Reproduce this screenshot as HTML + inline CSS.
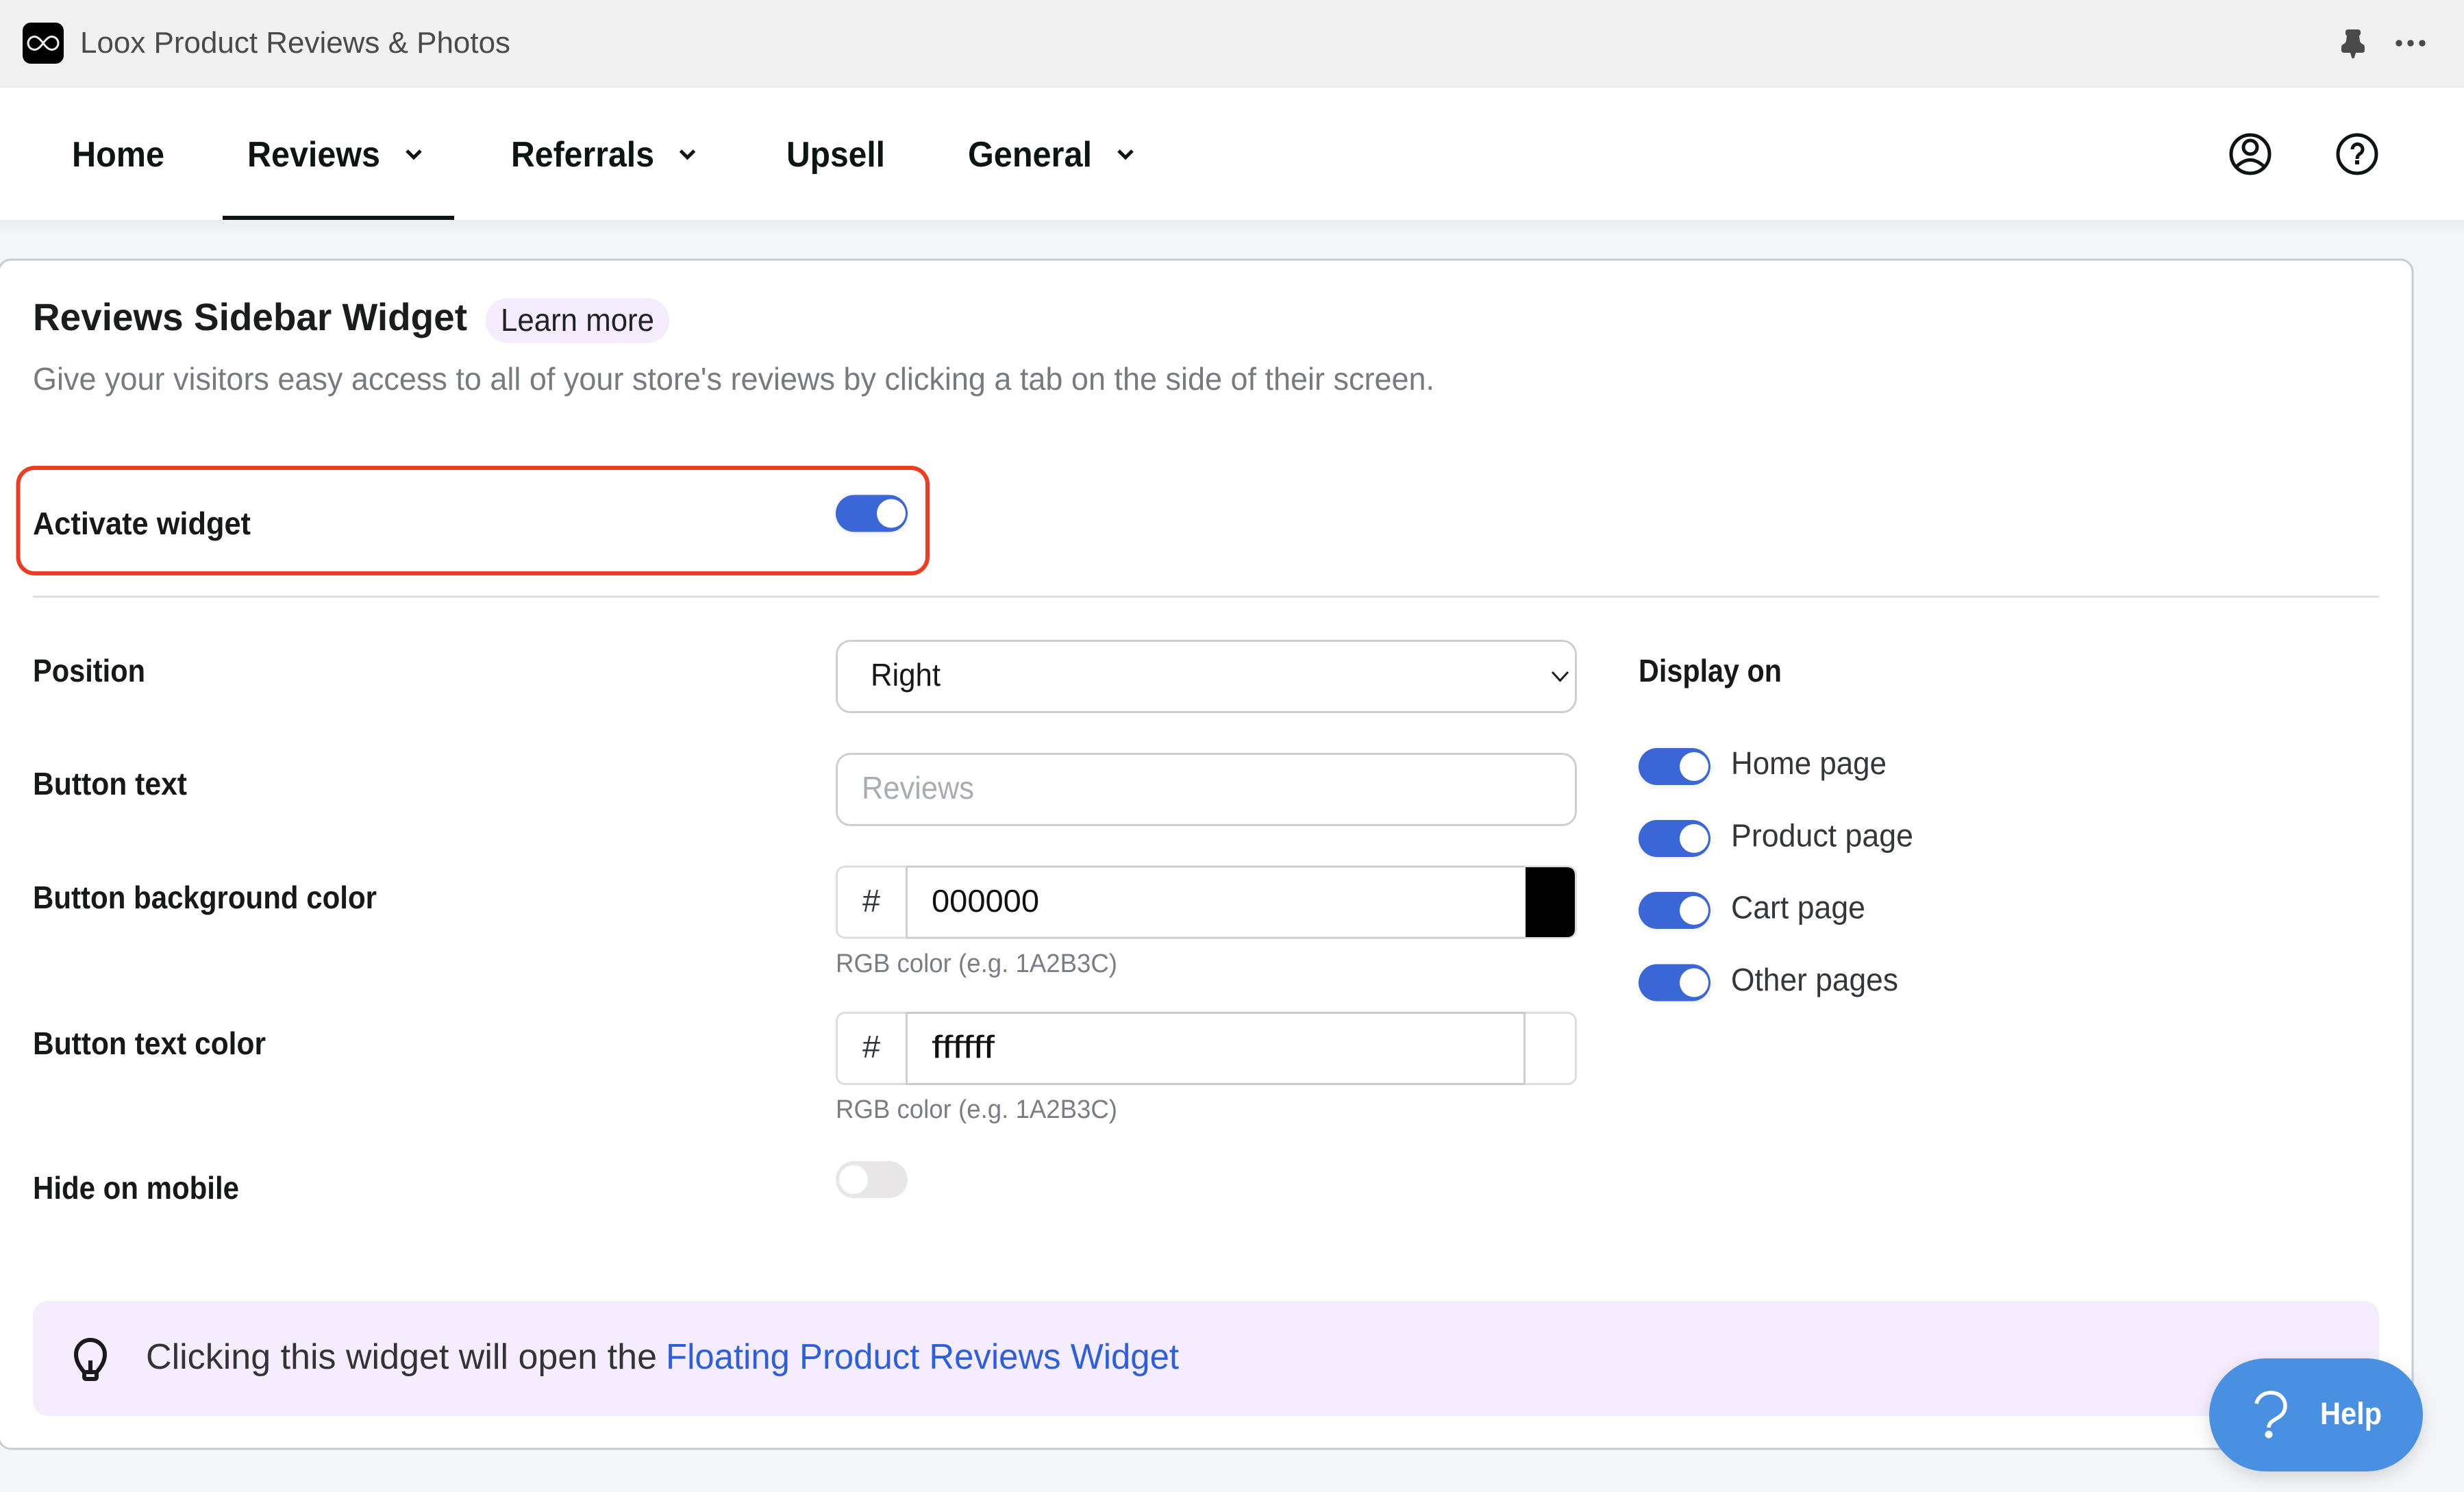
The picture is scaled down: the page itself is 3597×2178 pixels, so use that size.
<!DOCTYPE html>
<html lang="en">
<head>
<meta charset="utf-8">
<title>Loox Product Reviews &amp; Photos</title>
<style>
html,body{margin:0;padding:0;background:#f4f6f9;width:3597px;height:2178px;overflow:hidden}
svg{display:block;position:absolute;left:0;top:0}
text{font-family:"Liberation Sans",Arial,sans-serif;white-space:pre}
.s{font-size:46px;font-weight:700;fill:#16181a}
.r{font-size:46px;fill:#33363a}
.h{font-size:38px;fill:#7a7e84}
.n{font-size:52px;font-weight:700;fill:#0d1512}
</style>
</head>
<body>
<svg width="3597" height="2178" viewBox="0 0 3597 2178" xmlns="http://www.w3.org/2000/svg">
<defs>
<linearGradient id="ns" x1="0" y1="0" x2="0" y2="1"><stop offset="0" stop-color="#eceff2"/><stop offset="1" stop-color="#f4f6f9"/></linearGradient>
<filter id="hs" x="-20%" y="-30%" width="140%" height="170%"><feDropShadow dx="0" dy="8" stdDeviation="12" flood-color="#000" flood-opacity=".14"/></filter>
<filter id="ts" x="-20%" y="-30%" width="140%" height="170%"><feDropShadow dx="0" dy="2" stdDeviation="4" flood-color="#000" flood-opacity=".08"/></filter>
</defs>

<rect width="3597" height="2178" fill="#f4f6f9"/>
<!-- top bar -->
<rect width="3597" height="128" fill="#f1f1f1"/>
<rect y="126" width="3597" height="2" fill="#e9e9e9"/>
<rect x="33" y="33" width="60" height="60" rx="12" fill="#000"/>
<path d="M63 63C58 56 54 53.5 50.5 53.5A9.5 9.5 0 0 0 50.5 72.5C54 72.5 58 70 63 63C68 56 72 53.5 75.5 53.5A9.5 9.5 0 0 1 75.5 72.5C72 72.5 68 70 63 63Z" fill="none" stroke="#eee" stroke-width="3"/>
<text x="117" y="77" font-size="44" fill="#4a4a4a" textLength="628" lengthAdjust="spacingAndGlyphs">Loox Product Reviews &amp; Photos</text>
<path d="M3428 43H3442Q3446 43 3446 47V49Q3446 51 3444 52L3445 60Q3446 63 3450 65Q3452 66 3452 69V73Q3452 77 3448 77H3439L3437 84Q3435 87 3433 84L3431 77H3422Q3418 77 3418 73V69Q3418 66 3420 65Q3424 63 3425 60L3426 52Q3424 51 3424 49V47Q3424 43 3428 43Z" fill="#4a4a4a"/>
<circle cx="3502" cy="63" r="4.7" fill="#4a4a4a"/><circle cx="3519" cy="63" r="4.7" fill="#4a4a4a"/><circle cx="3536" cy="63" r="4.7" fill="#4a4a4a"/>

<!-- nav -->
<rect y="128" width="3597" height="193" fill="#fff"/>
<rect y="321" width="3597" height="26" fill="url(#ns)"/>
<text class="n" x="105" y="243" textLength="135" lengthAdjust="spacingAndGlyphs">Home</text>
<text class="n" x="361" y="243" textLength="194" lengthAdjust="spacingAndGlyphs">Reviews</text>
<path d="M594 220L604 230L614 220" fill="none" stroke="#0d1512" stroke-width="5"/>
<text class="n" x="746" y="243" textLength="209" lengthAdjust="spacingAndGlyphs">Referrals</text>
<path d="M993.500 220L1003.500 230L1013.500 220" fill="none" stroke="#0d1512" stroke-width="5"/>
<text class="n" x="1148" y="243" textLength="144" lengthAdjust="spacingAndGlyphs">Upsell</text>
<text class="n" x="1413" y="243" textLength="181" lengthAdjust="spacingAndGlyphs">General</text>
<path d="M1633 220L1643 230L1653 220" fill="none" stroke="#0d1512" stroke-width="5"/>
<rect x="325" y="315" width="338" height="6" fill="#0b1512"/>
<!-- user icon -->
<circle cx="3285" cy="225" r="28" fill="none" stroke="#0d1512" stroke-width="5"/>
<circle cx="3285" cy="215" r="10" fill="none" stroke="#0d1512" stroke-width="5"/>
<path d="M3265 243Q3285 224 3305 243" fill="none" stroke="#0d1512" stroke-width="5"/>
<!-- question icon -->
<circle cx="3441" cy="225" r="28" fill="none" stroke="#0d1512" stroke-width="5"/>
<path d="M3434 218A7.500 7.500 0 1 1 3445 224.500Q3441 227 3441 232" fill="none" stroke="#0d1512" stroke-width="5"/>
<rect x="3438" y="234" width="6" height="6" fill="#0d1512"/>

<!-- card -->
<rect x="-2" y="379" width="3524" height="1736" rx="18" fill="#fff" stroke="#c4cdd5" stroke-width="3"/>
<text x="48" y="482" font-size="56" font-weight="700" fill="#1a1c1e" textLength="634" lengthAdjust="spacingAndGlyphs">Reviews Sidebar Widget</text>
<rect x="709" y="435" width="268" height="66" rx="33" fill="#f4ecfd"/>
<text x="731" y="483" font-size="46" fill="#202225" textLength="224" lengthAdjust="spacingAndGlyphs">Learn more</text>
<text x="48" y="569" font-size="46" fill="#777b80" textLength="2046" lengthAdjust="spacingAndGlyphs">Give your visitors easy access to all of your store's reviews by clicking a tab on the side of their screen.</text>

<!-- red box -->
<rect x="26.500" y="683" width="1327.500" height="154" rx="24" fill="none" stroke="#ee3b23" stroke-width="6"/>
<text class="s" x="48" y="780" textLength="318" lengthAdjust="spacingAndGlyphs">Activate widget</text>
<g filter="url(#ts)"><rect x="1220" y="722.500" width="105" height="54" rx="27" fill="#3b66d5"/></g>
<circle cx="1301" cy="749.500" r="21" fill="#fff"/>
<rect x="48" y="869.500" width="3425" height="3" fill="#dcdcdc"/>

<!-- labels -->
<text class="s" x="48" y="995" textLength="164" lengthAdjust="spacingAndGlyphs">Position</text>
<text class="s" x="48" y="1160" textLength="225" lengthAdjust="spacingAndGlyphs">Button text</text>
<text class="s" x="48" y="1326" textLength="502" lengthAdjust="spacingAndGlyphs">Button background color</text>
<text class="s" x="48" y="1539" textLength="340" lengthAdjust="spacingAndGlyphs">Button text color</text>
<text class="s" x="48" y="1750" textLength="301" lengthAdjust="spacingAndGlyphs">Hide on mobile</text>

<!-- select -->
<rect x="1221.500" y="935.500" width="1079" height="104" rx="20" fill="#fff" stroke="#cdcfd4" stroke-width="3"/>
<text x="1271" y="1001" font-size="46" fill="#16181a" textLength="102" lengthAdjust="spacingAndGlyphs">Right</text>
<path d="M2266 981L2277.500 993.500L2289 981" fill="none" stroke="#1c1f22" stroke-width="3"/>

<!-- text input -->
<rect x="1221.500" y="1100.500" width="1079" height="104" rx="20" fill="#fff" stroke="#cdcfd4" stroke-width="3"/>
<text x="1258" y="1166" font-size="46" fill="#a7adb3" textLength="164" lengthAdjust="spacingAndGlyphs">Reviews</text>

<!-- color 1 -->
<rect x="1221.500" y="1265" width="1079" height="104" rx="12" fill="#fff" stroke="#dcdde1" stroke-width="3"/>
<path d="M1323 1265H2226M1323 1369H2226" stroke="#c9cbd1" stroke-width="3" fill="none"/>
<rect x="1322" y="1265" width="3" height="104" fill="#cdcfd4"/>
<text x="1259" y="1331" font-size="46" fill="#33363a" textLength="26" lengthAdjust="spacingAndGlyphs">#</text>
<text x="1360" y="1331" font-size="46" fill="#111" textLength="157" lengthAdjust="spacingAndGlyphs">000000</text>
<path d="M2227 1266H2287Q2299 1266 2299 1278V1356Q2299 1368 2287 1368H2227Z" fill="#000"/>
<text class="h" x="1220" y="1419" textLength="411" lengthAdjust="spacingAndGlyphs">RGB color (e.g. 1A2B3C)</text>

<!-- color 2 -->
<rect x="1221.500" y="1478.500" width="1079" height="104" rx="12" fill="#fff" stroke="#dcdde1" stroke-width="3"/>
<path d="M1323 1478.500H2226M1323 1582.500H2226" stroke="#c9cbd1" stroke-width="3" fill="none"/>
<rect x="1322" y="1478" width="3" height="105" fill="#cdcfd4"/>
<rect x="2224" y="1478" width="3" height="105" fill="#cdcfd4"/>
<text x="1259" y="1544" font-size="46" fill="#33363a" textLength="26" lengthAdjust="spacingAndGlyphs">#</text>
<text x="1360" y="1544" font-size="46" fill="#111" textLength="92" lengthAdjust="spacingAndGlyphs">ffffff</text>
<text class="h" x="1220" y="1632" textLength="411" lengthAdjust="spacingAndGlyphs">RGB color (e.g. 1A2B3C)</text>

<!-- off toggle -->
<rect x="1220" y="1695" width="105" height="54" rx="27" fill="#e8e6e6"/>
<circle cx="1246" cy="1722" r="21" fill="#fff"/>

<!-- display on -->
<text class="s" x="2392" y="995" textLength="209" lengthAdjust="spacingAndGlyphs">Display on</text>
<g filter="url(#ts)"><rect x="2392" y="1092" width="105" height="54" rx="27" fill="#3b66d5"/></g>
<circle cx="2473" cy="1119" r="21" fill="#fff"/>
<text class="r" x="2527" y="1130" textLength="227" lengthAdjust="spacingAndGlyphs">Home page</text>
<g filter="url(#ts)"><rect x="2392" y="1197" width="105" height="54" rx="27" fill="#3b66d5"/></g>
<circle cx="2473" cy="1224" r="21" fill="#fff"/>
<text class="r" x="2527" y="1235.500" textLength="266" lengthAdjust="spacingAndGlyphs">Product page</text>
<g filter="url(#ts)"><rect x="2392" y="1302" width="105" height="54" rx="27" fill="#3b66d5"/></g>
<circle cx="2473" cy="1329" r="21" fill="#fff"/>
<text class="r" x="2527" y="1340.500" textLength="196" lengthAdjust="spacingAndGlyphs">Cart page</text>
<g filter="url(#ts)"><rect x="2392" y="1407.500" width="105" height="54" rx="27" fill="#3b66d5"/></g>
<circle cx="2473" cy="1434.500" r="21" fill="#fff"/>
<text class="r" x="2527" y="1446" textLength="244" lengthAdjust="spacingAndGlyphs">Other pages</text>

<!-- banner -->
<rect x="48" y="1899" width="3425" height="168" rx="22" fill="#f5ecfe"/>
<path d="M123 2003Q111 1990 111 1977A21 21 0 0 1 153 1977Q153 1990 141 2003" fill="none" stroke="#1a1a1e" stroke-width="6"/>
<path d="M123 2003V2010Q123 2013 126 2013H138Q141 2013 141 2010V2003Z" fill="none" stroke="#1a1a1e" stroke-width="6"/>
<rect x="129" y="1986" width="6" height="18" fill="#1a1a1e"/>
<text x="213" y="1998" font-size="52" fill="#333336" textLength="746" lengthAdjust="spacingAndGlyphs">Clicking this widget will open the</text>
<text x="972" y="1998" font-size="52" fill="#2c5fde" textLength="749" lengthAdjust="spacingAndGlyphs">Floating Product Reviews Widget</text>

<!-- help -->
<g filter="url(#hs)"><rect x="3225" y="1983" width="312" height="165" rx="82.500" fill="#4a90e2"/></g>
<path d="M3294 2049C3296 2039 3305 2033 3315 2033C3328 2033 3336 2042 3336 2052C3336 2062 3330 2067 3323 2071C3316 2075 3312 2078 3312 2084" fill="none" stroke="#fff" stroke-width="5.500"/>
<circle cx="3312" cy="2094" r="5.500" fill="#fff"/>
<text x="3387" y="2079" font-size="45" font-weight="700" fill="#fff" textLength="90" lengthAdjust="spacingAndGlyphs">Help</text>
</svg>
</body>
</html>
